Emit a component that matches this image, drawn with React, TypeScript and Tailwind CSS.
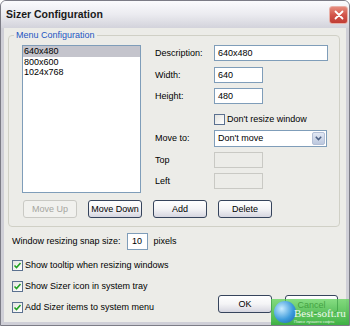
import React from "react";

const Check = () => (
  <svg width="9" height="9" viewBox="0 0 9 9">
    <path d="M1.5 4.5 L3.5 6.5 L7.5 2" fill="none" stroke="#21a121" strokeWidth="1.6" />
  </svg>
);

const CheckBox = ({ checked }: { checked?: boolean }) => (
  <span className="flex h-[11px] w-[11px] shrink-0 items-center justify-center border border-[#5b7190] bg-linear-to-br from-[#e4e4e0] to-white">
    {checked && <Check />}
  </span>
);

const XpButton = ({
  children,
  disabled,
  className = "",
}: {
  children: React.ReactNode;
  disabled?: boolean;
  className?: string;
}) => (
  <button
    className={`h-[18px] rounded-[3px] border text-[9px] leading-none ${
      disabled
        ? "border-[#c9c9c4] bg-[#f1f1ee] text-[#a5a5a0]"
        : "border-[#36445c] bg-linear-to-b from-white via-[#f4f4f6] to-[#d6d6e0] text-black"
    } ${className}`}
  >
    {children}
  </button>
);

const Field = ({
  value,
  width,
  disabled,
}: {
  value?: string;
  width: string;
  disabled?: boolean;
}) => (
  <div
    className={`flex h-[16px] items-center px-[3px] ${width} border ${
      disabled ? "border-[#c9c9c4] bg-[#ecece8]" : "border-[#7f9db9] bg-white"
    }`}
  >
    {value}
  </div>
);

const Row = ({ label, children, className = "" }: { label: string; children: React.ReactNode; className?: string }) => (
  <div className={`flex items-center ${className}`}>
    <span className="w-[59px]">{label}</span>
    {children}
  </div>
);

export default function App() {
  const sizes = ["640x480", "800x600", "1024x768"];
  return (
    <div className="relative flex h-[326px] w-[350px] flex-col overflow-hidden rounded-t-[6px] border border-[#7c7c86] bg-[#cfcfd7] font-['Liberation_Sans',Arial,sans-serif] text-[9px] leading-[11px] text-black">
      <div className="flex h-[27px] shrink-0 items-center justify-between bg-linear-to-b from-[#fbfbfd] via-[#ebebf0] to-[#d3d3db] pl-[5px] pr-[1px]">
        <span className="text-[10.5px] font-bold text-[#1a1a1a]">Sizer Configuration</span>
        <span className="flex h-[18px] w-[19px] items-center justify-center rounded-[3px] border border-[#e8b0a8] bg-linear-to-b from-[#e58a7c] via-[#d2544a] to-[#c03c34]">
          <svg width="10" height="10" viewBox="0 0 10 10">
            <path d="M1.5 1.5 L8.5 8.5 M8.5 1.5 L1.5 8.5" stroke="white" strokeWidth="1.8" strokeLinecap="round" />
          </svg>
        </span>
      </div>

      <div className="mx-[3px] mb-[3px] flex flex-1 flex-col bg-[#ecece8] pl-[4px] pr-[6px] pt-[2px]">
        <fieldset className="rounded-[4px] border border-[#d0d0c6] px-0 pb-[8px]">
          <legend className="ml-[5px] px-[2px] text-[9px] leading-[11px] text-[#2455c3]">Menu Configuration</legend>
          <div className="pl-[13px] pt-[4px]">
            <div className="flex">
              <div className="h-[148px] w-[119px] border border-[#7f9db9] bg-white">
                {sizes.map((s, i) => (
                  <div key={s} className={`h-[10.5px] px-[1px] leading-[10.5px] ${i === 0 ? "bg-[#c4c4cc]" : ""}`}>
                    {s}
                  </div>
                ))}
              </div>
              <div className="ml-[14px] flex flex-col">
                <Row label="Description:">
                  <Field value="640x480" width="w-[114px]" />
                </Row>
                <Row label="Width:" className="mt-[6px]">
                  <Field value="640" width="w-[49px]" />
                </Row>
                <Row label="Height:" className="mt-[5px]">
                  <Field value="480" width="w-[49px]" />
                </Row>
                <div className="mt-[10px] flex items-center pl-[59px]">
                  <CheckBox />
                  <span className="ml-[2px]">Don't resize window</span>
                </div>
                <Row label="Move to:" className="mt-[5px]">
                  <div className="flex h-[17px] w-[113px] items-center border border-[#7f9db9] bg-white">
                    <span className="flex-1 px-[3px]">Don't move</span>
                    <span className="m-[1px] flex h-[13px] w-[13px] items-center justify-center rounded-[2px] border border-[#b3bfd6] bg-linear-to-b from-[#e2e8f4] to-[#bcc8de]">
                      <svg width="7" height="5" viewBox="0 0 7 5">
                        <path d="M0.8 0.8 L3.5 3.6 L6.2 0.8" fill="none" stroke="#4d6185" strokeWidth="1.5" />
                      </svg>
                    </span>
                  </div>
                </Row>
                <Row label="Top" className="mt-[5px]">
                  <Field width="w-[49px]" disabled />
                </Row>
                <Row label="Left" className="mt-[5px]">
                  <Field width="w-[49px]" disabled />
                </Row>
              </div>
            </div>
            <div className="ml-[1px] mt-[7px] flex gap-[11px]">
              <XpButton disabled className="w-[54px]">Move Up</XpButton>
              <XpButton className="w-[54px]">Move Down</XpButton>
              <XpButton className="w-[54px]">Add</XpButton>
              <XpButton className="w-[54px]">Delete</XpButton>
            </div>
          </div>
        </fieldset>

        <div className="flex justify-between pl-[4px] pr-[2px]">
          <div className="flex flex-col">
            <div className="mt-[6px] flex h-[17px] items-center">
              <span>Window resizing snap size:</span>
              <div className="ml-[6px] flex h-[17px] w-[21px] items-center justify-center border border-[#7f9db9] bg-white">10</div>
              <span className="ml-[6px]">pixels</span>
            </div>
            {[
              "Show tooltip when resizing windows",
              "Show Sizer icon in system tray",
              "Add Sizer items to system menu",
            ].map((t) => (
              <div key={t} className="mt-[10px] flex h-[11px] items-center">
                <CheckBox checked />
                <span className="ml-[2px]">{t}</span>
              </div>
            ))}
          </div>
          <div className="flex items-end gap-[13px]">
            <XpButton className="w-[54px]">OK</XpButton>
            <XpButton className="w-[53px] items-start pt-[2px]">Cancel</XpButton>
          </div>
        </div>
      </div>

      <div className="absolute bottom-0 right-0 flex h-[26px] w-[78px] items-end bg-linear-to-b from-[#5fd35a]/75 to-[#2fae35]/90 pb-[1px]">
        <span className="mb-[1px] ml-[3px] h-[22px] w-[22px] shrink-0 rounded-full bg-[radial-gradient(circle_at_35%_35%,#c9ecff,#3d9bdc_55%,#1b5fa8)]" />
        <div className="ml-[-2px] flex flex-col leading-none">
          <span className="font-['Liberation_Serif',serif] text-[11px] text-white/90">Best-soft.ru</span>
          <span className="mt-[1px] text-[4px] text-white/80">Поиск лучшего софта</span>
        </div>
      </div>
    </div>
  );
}
